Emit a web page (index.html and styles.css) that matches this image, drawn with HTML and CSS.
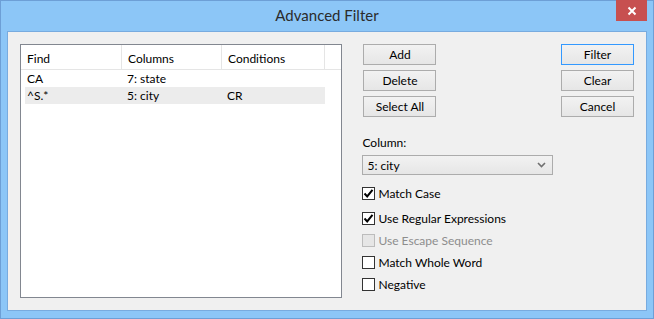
FILE: index.html
```html
<!DOCTYPE html>
<html>
<head>
  <title>Advanced Filter</title>
  <link rel="stylesheet" href="styles.css">
</head>
<body>
  <div class="window">
    <div class="titlebar">
      <span class="title">Advanced Filter</span>
      <button class="close" aria-label="Close">
        <svg width="10" height="10" viewBox="0 0 10 10"><path d="M1.5 1.5 L8.5 8.5 M8.5 1.5 L1.5 8.5" stroke="#fff" stroke-width="2"/></svg>
      </button>
    </div>
    <div class="client">
      <div class="listbox">
        <div class="list-head">
          <div class="col c1">Find</div>
          <div class="col c2">Columns</div>
          <div class="col c3">Conditions</div>
        </div>
        <div class="row">
          <div class="cell c1">CA</div>
          <div class="cell c2">7: state</div>
          <div class="cell c3"></div>
        </div>
        <div class="row selected">
          <div class="cell c1">^S.*</div>
          <div class="cell c2">5: city</div>
          <div class="cell c3">CR</div>
        </div>
      </div>

      <div class="side">
        <div class="btn-row">
          <div class="btn-col">
            <button class="btn">Add</button>
            <button class="btn">Delete</button>
            <button class="btn">Select All</button>
          </div>
          <div class="btn-col">
            <button class="btn default">Filter</button>
            <button class="btn">Clear</button>
            <button class="btn">Cancel</button>
          </div>
        </div>

        <label class="field-label">Column:</label>
        <div class="select">
          <span>5: city</span>
          <svg width="9" height="6" viewBox="0 0 9 6"><path d="M1 1 L4.5 4.5 L8 1" fill="none" stroke="#707070" stroke-width="1.6"/></svg>
        </div>

        <div class="checks">
          <div class="check first"><span class="box"><svg width="11" height="11" viewBox="0 0 11 11"><path d="M1.5 5.5 L4.2 8.4 L9.5 1.8" fill="none" stroke="#000" stroke-width="2"/></svg></span>Match Case</div>
          <div class="check"><span class="box"><svg width="11" height="11" viewBox="0 0 11 11"><path d="M1.5 5.5 L4.2 8.4 L9.5 1.8" fill="none" stroke="#000" stroke-width="2"/></svg></span>Use Regular Expressions</div>
          <div class="check disabled"><span class="box"></span>Use Escape Sequence</div>
          <div class="check"><span class="box"></span>Match Whole Word</div>
          <div class="check"><span class="box"></span>Negative</div>
        </div>
      </div>
    </div>
  </div>
</body>
</html>
```

FILE: styles.css
```css
body {
  margin: 0;
  font-family: Lato, "Noto Sans", sans-serif;
  font-size: 12px;
  color: #000;
}
.window {
  width: 654px;
  height: 319px;
  box-sizing: border-box;
  background: #8cc6f7;
  border: 1px solid #6d9fd6;
  padding: 0 6px 7px 6px;
  display: flex;
  flex-direction: column;
}
.titlebar {
  height: 30px;
  position: relative;
  display: flex;
  align-items: center;
  justify-content: center;
}
.title {
  font-size: 15px;
  color: #2b2b2b;
  margin-top: -2px;
}
.close {
  position: absolute;
  top: -1px;
  right: 0;
  width: 31px;
  height: 21px;
  border: none;
  background: #c75050;
  display: flex;
  align-items: center;
  justify-content: center;
  padding: 0;
}
.client {
  flex: 1;
  background: #f0f0f0;
  border: 1px solid #78abdf;
  display: flex;
  padding: 12px 12px 0 12px;
  gap: 20px;
}
.listbox {
  width: 321px;
  height: 252px;
  background: #fff;
  border: 1px solid #828790;
}
.list-head {
  display: flex;
  height: 24px;
  border-bottom: 1px solid #e5e5e5;
}
.col {
  border-right: 1px solid #e5e5e5;
  padding-left: 6px;
  box-sizing: border-box;
  display: flex;
  align-items: center;
  padding-top: 2px;
}
.col.c1 { width: 101px; }
.col.c2 { width: 100px; }
.col.c3 { width: 103px; }
.row {
  display: flex;
  height: 17px;
  margin-left: 4px;
  width: 300px;
  align-items: center;
}
.row.selected {
  background: #ececec;
}
.cell {
  padding-left: 2px;
  box-sizing: border-box;
}
.cell.c1 { width: 100px; }
.cell.c2 { width: 100px; }
.cell.c3 { width: 100px; }
.side {
  display: flex;
  flex-direction: column;
  width: 272px;
}
.btn-row {
  display: flex;
  justify-content: space-between;
  padding-left: 1px;
}
.btn-col {
  display: flex;
  flex-direction: column;
  gap: 5px;
}
.btn {
  width: 73px;
  height: 21px;
  font-family: inherit;
  font-size: 12px;
  background: linear-gradient(#f2f2f2, #e6e6e6);
  border: 1px solid #acacac;
  padding: 0;
  color: #000;
}
.btn.default {
  border: 1px solid #3399ff;
}
.field-label {
  margin-top: 15px;
  height: 20px;
  display: flex;
  align-items: center;
}
.select {
  width: 191px;
  height: 20px;
  margin-top: 3px;
  box-sizing: border-box;
  border: 1px solid #acacac;
  background: linear-gradient(#f2f2f2, #e6e6e6);
  display: flex;
  align-items: center;
  justify-content: space-between;
  padding: 0 6px 0 4px;
}
.checks {
  margin-top: 12px;
  display: flex;
  flex-direction: column;
  gap: 9px;
}
.check {
  display: flex;
  align-items: center;
  height: 13px;
  gap: 3px;
}
.check.first {
  margin-bottom: 3px;
}
.box {
  width: 13px;
  height: 13px;
  box-sizing: border-box;
  border: 1px solid #333;
  background: #fff;
  display: flex;
  align-items: center;
  justify-content: center;
}
.check.disabled {
  color: #8d8d8d;
}
.check.disabled .box {
  border-color: #bcbcbc;
  background: #e6e6e6;
}
```
